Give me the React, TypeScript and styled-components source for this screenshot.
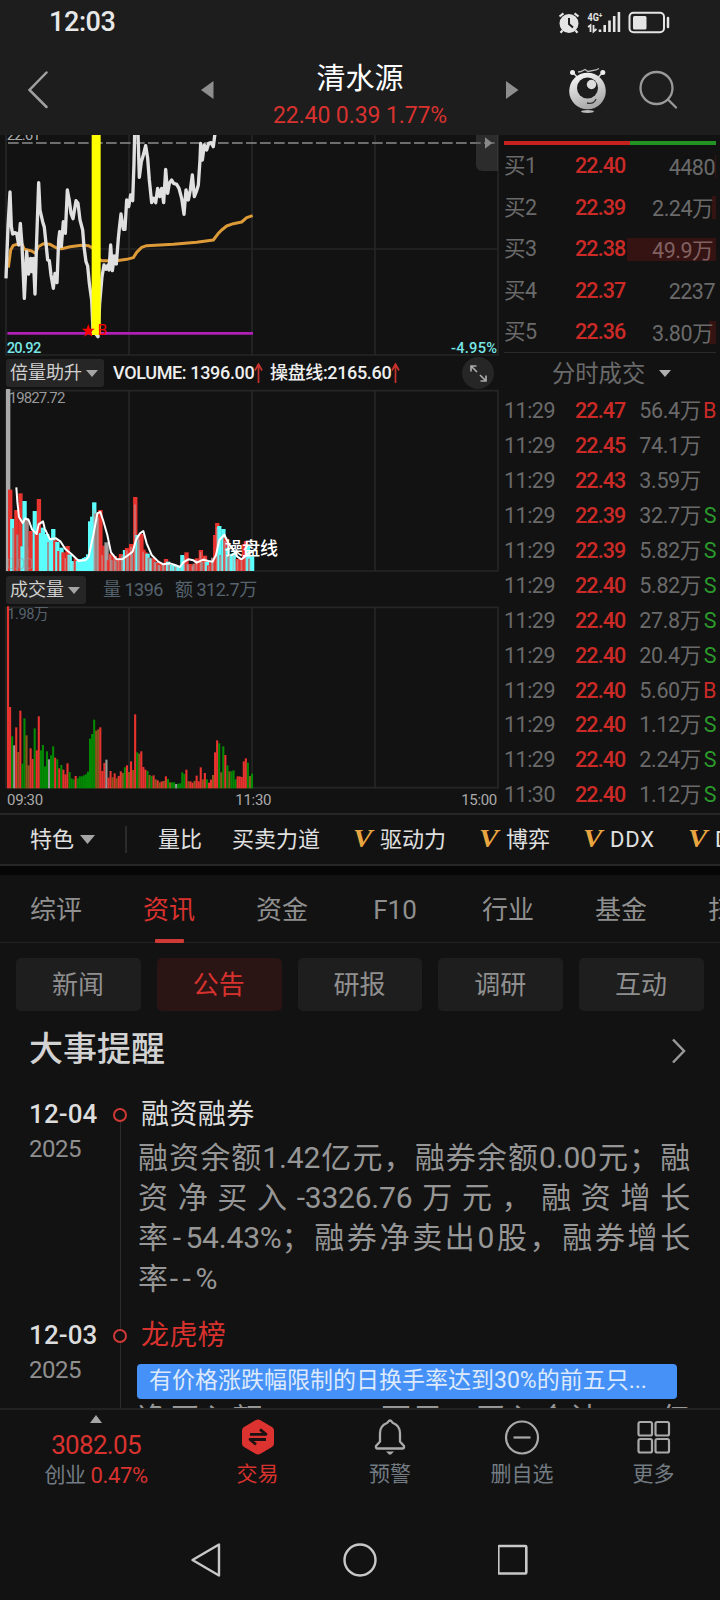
import React from "react";
import styled, { createGlobalStyle, css } from "styled-components";

const GlobalStyle = createGlobalStyle`
  * { box-sizing: border-box; }
  body { margin: 0; background: #121212; }
  svg { display: block; }
`;

const sans = `Roboto, "Noto Sans CJK SC", sans-serif`;

const Screen = styled.div`
  width: 720px; height: 1600px; overflow: hidden;
  display: flex; flex-direction: column;
  background: #121212; color: #ddd;
  font-family: ${sans}; white-space: nowrap;
`;

/* ---------- header ---------- */
const StatusBar = styled.div`
  height: 45px; flex: none; background: #1d1d1d;
  display: flex; align-items: center; justify-content: space-between;
  padding: 0 50px 0 49px;
`;
const Clock = styled.div`font-size: 27px; line-height: 47px; font-weight: 500; color: #e8e8e8; letter-spacing: -0.4px;`;
const Header = styled.div`
  height: 90px; flex: none; background: #1d1d1d;
  display: grid; grid-template-columns: 201px 72px 174px 59px 51px 71px 92px; align-items: center;
`;
const Cell = styled.div<{ $pl?: number }>`display: flex; padding-left: ${p => p.$pl ?? 0}px;`;
const Title = styled.div`padding-top: 14px; height: 90px;`;
const StockName = styled.div`font-size: 29px; line-height: 40px; color: #fff; text-align: center;`;
const StockQuote = styled.div`font-size: 23px; line-height: 34px; color: #d8322f; text-align: center; letter-spacing: -0.1px;`;

/* ---------- quote area ---------- */
const Market = styled.div`height: 680px; flex: none; display: flex; border-bottom: 2px solid #262626;`;
const Charts = styled.div`width: 504px; display: flex; flex-direction: column;`;
const Side = styled.div`width: 212px; display: flex; flex-direction: column;`;

const IndicatorRow = styled.div<{ $h: number }>`
  height: ${p => p.$h}px; flex: none; display: flex; align-items: center; padding-left: 6px;
  font-size: 18px; line-height: 26px;
`;
const Picker = styled.div<{ $w: number }>`
  width: ${p => p.$w}px; height: 28px; padding-left: 4px; border-radius: 3px; background: #262626; color: #d0d0d0;
  display: flex; align-items: center; gap: 4px;
`;
const Reading = styled.span<{ $ml: number; $w?: number; $dim?: boolean }>`
  margin-left: ${p => p.$ml}px; display: flex; align-items: center; flex: none; letter-spacing: -0.35px;
  ${p => p.$w && css`width: ${p.$w}px;`}
  ${p => (p.$dim ? css`color: #56636e; letter-spacing: -0.5px;` : css`color: #eee; font-weight: 500;`)}
`;
const ExpandButton = styled.div`
  width: 32px; height: 32px; border-radius: 50%; background: #262626; margin-left: auto; margin-right: 10px;
  display: flex; align-items: center; justify-content: center;
`;
const TimeAxis = styled.div`
  height: 24px; padding: 0 7px 0 7px; width: 504px; display: grid; grid-template-columns: 1fr 1fr 1fr;
  font-size: 15px; line-height: 23px; color: #aaa; letter-spacing: -0.3px;
  span:nth-child(2) { padding-left: 65px; }
  span:nth-child(3) { text-align: right; }
`;

const Ratio = styled.div`height: 4px; margin: 6px 0 0; display: flex; flex: none;`;
const RatioPart = styled.div<{ $w: number; $c: string }>`width: ${p => p.$w}px; background: ${p => p.$c};`;
const Bids = styled.div`height: 208px; padding-top: 0.5px; flex: none; display: flex; flex-direction: column; border-bottom: 1px solid #2a2a2a;`;
const rowText = css`font-size: 21.5px; line-height: 30px; color: #6a6a6a; letter-spacing: -0.5px;`;
const BidRow = styled.div`
  height: 41.5px; flex: none; display: grid; grid-template-columns: 72px 51px 89px; align-items: center; ${rowText}
`;
const Price = styled.span`color: #cb2a27; font-weight: 500; letter-spacing: -0.9px; margin-left: -1px;`;
const BidVolume = styled.span<{ $depth: number; $inset: number }>`
  height: 23px; line-height: 25px; text-align: right; padding-right: ${p => p.$inset}px;
  background: linear-gradient(#351313, #351313) right / ${p => p.$depth}px 100% no-repeat;
  ${p => p.$depth > 80 && css`color: #806060;`}
`;
const TradesTitle = styled.div`
  height: 41px; flex: none; display: flex; align-items: center; padding-left: 48px; gap: 14px;
  font-size: 23.3px; line-height: 32px; color: #6a6a6a;
`;
const Trades = styled.div`display: flex; flex-direction: column;`;
const TradeRow = styled.div`
  height: 34.9px; flex: none; display: grid; grid-template-columns: 72px 51px 74px 15px; align-items: center; ${rowText}
`;
const TradeVolume = styled.span`text-align: right; letter-spacing: -0.35px;`;
const Mark = styled.span<{ $buy: boolean }>`text-align: right; color: ${p => (p.$buy ? "#cb2a27" : "#2b9a2b")};`;

/* ---------- feature strip and tabs ---------- */
const Features = styled.div`
  height: 51px; flex: none; display: flex; align-items: center; border-bottom: 2px solid #262626; padding-left: 30px;
  font-size: 22px; line-height: 34px; color: #e0e0e0;
`;
const Feature = styled.span<{ $ml: number; $latin?: boolean }>`
  margin-left: ${p => p.$ml}px; flex: none; display: flex; align-items: center; gap: 6px;
  ${p => p.$latin && css`letter-spacing: 0.8px;`}
`;
const VBadge = styled.b`
  font: italic bold 26px/28px "Liberation Serif", serif; width: 21px; color: #e9a640; letter-spacing: 0;
  transform: scaleX(1.12); transform-origin: left; padding-bottom: 2px;
`;
const Divider = styled.i`width: 2px; height: 27px; flex: none; background: #2b2b2b; margin-left: 30px;`;
const Gap = styled.div`height: 9px; flex: none; background: #060606;`;
const Tabs = styled.div`height: 68px; flex: none; display: flex; border-bottom: 1px solid #222; margin-bottom: 15px;`;
const Tab = styled.div<{ $on?: boolean }>`
  width: 113px; flex: none; text-align: center; font-size: 26px; line-height: 70px; height: 68px; padding-right: 1px;
  color: ${p => (p.$on ? "#d8322f" : "#8f8f8f")};
  position: relative;
  ${p => p.$on && css`&::after { content: ""; position: absolute; left: 42px; bottom: 0; width: 29px; height: 4px; border-radius: 1px; background: #cf3936; }`}
`;
const Pills = styled.div`height: 53px; flex: none; display: grid; grid-template-columns: repeat(5, 1fr); gap: 16px; padding: 0 16px;`;
const Pill = styled.div<{ $on?: boolean }>`
  border-radius: 5px; text-align: center; font-size: 26px; line-height: 54px; height: 53px; padding-right: 1px;
  background: ${p => (p.$on ? "#2a1414" : "#1e1e1e")}; color: ${p => (p.$on ? "#d8322f" : "#8f8f8f")};
`;

/* ---------- timeline ---------- */
const SectionHead = styled.div`
  height: 79px; flex: none; display: flex; justify-content: space-between; align-items: flex-start; padding: 15px 34px 0 29px;
  font-size: 34px; line-height: 46px; font-weight: 500; color: #d2d2d2;
  svg { margin-top: 12px; }
`;
const Timeline = styled.div`height: 318px; flex: none; overflow: hidden;`;
const Entry = styled.div<{ $h: number }>`height: ${p => p.$h}px; display: grid; grid-template-columns: 84px 25px 1fr; padding-left: 29px;`;
const Day = styled.div`font-size: 26px; line-height: 48px; height: 47px; font-weight: 500; color: #ddd; letter-spacing: 0.1px;`;
const Year = styled.div`font-size: 24px; line-height: 24px; color: #8f8f8f; letter-spacing: -0.5px;`;
const Rail = styled.div<{ $first?: boolean }>`
  display: flex; flex-direction: column; align-items: center; width: 14px;
  &::before { content: ""; height: 18px; width: 1px; background: ${p => (p.$first ? "transparent" : "#2c2c2c")}; }
  &::after { content: ""; flex: 1; width: 1px; background: #2c2c2c; }
`;
const Dot = styled.i`width: 14px; height: 14px; flex: none; border-radius: 50%; border: 2px solid #cf3936;`;
const Headline = styled.div<{ $hot?: boolean }>`
  font-size: 28px; line-height: 50px; height: 46px; padding-left: 3px; color: ${p => (p.$hot ? "#d8322f" : "#ddd")};
  letter-spacing: 0.4px;
`;
const Body = styled.div<{ $top?: number }>`width: 552px; padding-top: ${p => p.$top ?? 0}px; font-size: 30px; line-height: 40.4px; color: #969696;`;
const Line = styled.div<{ $last?: boolean }>`text-align: justify; text-align-last: ${p => (p.$last ? "left" : "justify")}; letter-spacing: -0.2px;`;
const Dash = styled.span`letter-spacing: 4.5px; padding-left: 2px;`;
const Tag = styled.div`
  width: 540px; height: 35px; margin: 7px 0 0 -1px; padding-left: 12px; border-radius: 4px; background: #4691f7;
  font-size: 23px; line-height: 34px; color: #dce9fc;
`;

/* ---------- bottom bars ---------- */
const BottomBar = styled.div`
  height: 112px; flex: none; border-top: 2px solid #222; display: grid; grid-template-columns: 192px 131px 134px 130px 133px;
`;
const Index = styled.div`display: flex; flex-direction: column; align-items: center; padding-top: 5px; color: #d8322f;`;
const IndexValue = styled.div`font-size: 26px; line-height: 30px; letter-spacing: -0.7px; margin-top: 7px;`;
const IndexChange = styled.div`font-size: 22px; line-height: 31px; display: flex; gap: 5px; letter-spacing: -0.4px;`;
const Muted = styled.span`color: #737b83; font-size: 21px;`;
const Action = styled.div<{ $on?: boolean }>`
  display: flex; flex-direction: column; align-items: center; padding-top: 9px; font-size: 21px; line-height: 30px;
  color: ${p => (p.$on ? "#d8322f" : "#737b83")};
  svg { margin-bottom: 4px; flex: none; }
`;
const SystemNav = styled.div`flex: 1; display: flex; align-items: flex-start; padding: 22px 0 0 188px; gap: 119px;`;

/* Per-minute volume: bar height out of 546 and direction (r up, g down, o mixed, n flat). */
const volumes = (
  "546r 244r 156g 129n 183r 109o 233r 74g 210g 159o 69o 120r 88r 180g 114r 216r 114g 130g 66g 111g 87n 99g 126g 92r 87g 60r 70g 56r 42r 75r 49g 30g 27g 37r " +
  "30g 36g 36g 39g 42g 50g 149g 163g 206g 173o 177o 183r 52r 76r 86n 32r 52r 33o 45r 30o 37r 51r 46o 63g 69r 49o 81r 55o 222r 108g 104o 111r 64r 56r 52g 40o 37g 39r 27o 24r 18o " +
  "21r 22o 36r 28g 18o 18g 18g 13n 14g 15g 48g 43g 56r 21o 21r 17r 22o 38r 21r 63r 27o 46r 27g 17r 26r 40o 108r 144r 135g 48o 126g 100r 69g 51o 51g 54g 27g 36r 36r 34r 81r 90r 77g 37o 44g"
).split(" ").map(s => ({ h: parseInt(s, 10), k: s.slice(-1) }));

const STEP = 6.15;
const volumeFill: Record<string, string> = { r: "#e8332f", g: "#048904", o: "#8a5a1c", n: "#9a9a9a" };
const leverFill: Record<string, string> = { r: "#e8332f", g: "#5cfdfd", o: "#a08484", n: "#9a9a9a" };

const pricePath =
  "18,445 24,290 30,186 34,290 38,312 44,308 50,310 56,345 61,280 66,345 73,505 80,365 86,432 92,385 96,425 100,385 105,492 110,330 116,158 120,240 128,275 133,292 138,340 143,390 148,392 153,435 160,475 165,430 171,458 176,330 179,305 184,350 190,275 196,310 202,180 208,212 213,250 219,266 228,212 234,220 240,270 248,300 252,350 258,395 263,408 268,460 275,510 279,600 294,620 299,520 306,440 312,405 318,418 324,405 327,420 332,345 337,422 343,378 349,402 355,325 358,295 363,252 370,298 375,298 380,210 386,230 392,195 398,212 402,100 404,10 414,10 418,142 424,95 430,75 437,47 443,85 448,150 455,218 461,205 467,218 473,175 479,200 485,175 491,218 497,118 503,190 508,160 515,150 521,160 530,163 537,175 545,205 552,253 558,180 565,210 571,180 577,135 583,200 589,185 595,165 600,90 602,40 607,90 613,45 620,60 626,40 633,38 640,50 645,10";
const averagePath =
  "25,413 32,360 40,346 55,342 65,340 73,358 95,363 106,370 115,350 130,341 150,343 170,354 185,356 210,350 245,346 265,347 280,355 290,385 305,392 350,392 380,388 400,383 410,367 425,352 440,347 520,343 590,337 640,330 655,310 665,300 680,288 700,281 725,276 740,263 758,257";
const leverPath =
  "49,307 52,350 57,396 68,414 76,400 86,405 96,433 110,447 116,418 129,409 134,430 150,463 168,460 182,470 196,492 215,508 236,528 258,525 266,515 280,450 292,385 301,381 310,408 322,450 333,502 350,523 368,522 385,510 398,500 408,465 420,445 430,438 440,475 455,510 475,530 490,538 510,535 525,540 540,546 550,532 565,523 580,526 590,533 610,524 625,528 638,530 648,510 658,465 673,449 685,475 700,495 712,515 724,523 735,515 745,505 758,500";

const Label = styled.text`font-family: ${sans};`;
const Frame = styled.svg`flex: none; overflow: hidden;`;

const Grid = ({ top, bottom, mid }: { top?: number; bottom: number; mid?: number }) => (
  <g stroke="#262626" strokeWidth={5} fill="none">
    {[18, 387, 756, 1125, 1494].map(x => <path key={x} d={`M${x} ${top ?? 0}V${bottom}`} />)}
    {[top, mid, bottom].map((y, i) => y !== undefined && <path key={i} d={`M16 ${y}H1496`} />)}
  </g>
);

const PriceChart = () => (
  <Frame width={504} height={222} viewBox="0 15 1512 666">
    <Grid bottom={675} mid={357} />
    <path d="M18 39H1494" stroke="#8c8c8c" strokeWidth={5} strokeDasharray="32 10" strokeDashoffset={-6} />
    <Label x={20} y={31} fontSize={45} fill="#aaa" textLength={102}>22.61</Label>
    <path d="M22 610H759" stroke="#b01fb6" strokeWidth={8} />
    <polyline points={averagePath} fill="none" stroke="#dd9a38" strokeWidth={9} strokeLinejoin="round" />
    <polyline points={pricePath} fill="none" stroke="#e0e0e0" strokeWidth={10} strokeLinejoin="round" />
    <rect x={275} y={0} width={27} height={615} fill="#ffff00" />
    <path d="M265 582l5 14h14l-11 9 4 15-12-9-12 9 4-15-11-9h14z" fill="#f00" />
    <Label x={293} y={615} fontSize={46} fill="#f00" textLength={28} lengthAdjust="spacingAndGlyphs">B</Label>
    <Label x={20} y={668} fontSize={44} fontWeight={500} fill="#77e6e6" textLength={104}>20.92</Label>
    <Label x={1353} y={668} fontSize={44} fontWeight={500} fill="#77e6e6" textLength={138}>-4.95%</Label>
    <path d="M1428 0h66v123h-46q-20 0-20-20z" fill="#555" fillOpacity={0.4} />
    <path d="M1483 22l22 17-22 17z" fill="#888" transform="translate(-28 0)" />
  </Frame>
);

const LeverChart = () => (
  <Frame width={504} height={185} viewBox="0 12 1512 555">
    <Grid top={17} bottom={558} />
    <Label x={26} y={54} fontSize={45} fill="#999" textLength={170}>19827.72</Label>
    {volumes.map((v, i) => (
      <rect key={i} x={18 + i * STEP} y={558 - v.h} width={13} height={v.h} fill={i ? leverFill[v.k] : "#aaa"} />
    ))}
    {volumes.map((v, i) => i % 2 === 0 && i > 26 && !(i > 33 && i < 42) && (
      <rect key={i} x={21 + i * STEP} y={558 - v.h * 0.9} width={5} height={v.h * 0.9} fill="#b9a9a9" fillOpacity={0.55} />
    ))}
    <Label x={20} y={552} fontSize={45} fill="#999" fillOpacity={0.55} textLength={80}>0.00</Label>
    <polyline points={leverPath} fill="none" stroke="#fff" strokeWidth={6} strokeLinejoin="round" />
    <Label x={674} y={511} fontSize={54} fontWeight={500} fill="#fff" textLength={160}>操盘线</Label>
  </Frame>
);

const VolumeChart = () => (
  <Frame width={504} height={183} viewBox="0 107 1512 549">
    <Grid top={111} bottom={652} />
    <Label x={22} y={146} fontSize={44} fill="#56636e" textLength={124}>1.98万</Label>
    {volumes.map((v, i) => (
      <rect key={i} x={21 + i * STEP} y={654 - v.h} width={6.3} height={v.h} fill={volumeFill[v.k]} />
    ))}
  </Frame>
);

const Caret = ({ w = 12, h = 7, up = false, fill = "#a5a5a5" }: { w?: number; h?: number; up?: boolean; fill?: string }) => (
  <svg width={w} height={h} viewBox="0 0 12 7" preserveAspectRatio="none"><path d={up ? "M0 7L6 0 12 7z" : "M0 0H12L6 7z"} fill={fill} /></svg>
);
const RiseIcon = styled.svg`flex: none;`;
const Rise = () => (
  <RiseIcon width={9} height={20} viewBox="0 0 9 20" fill="none" stroke="#c8322c" strokeWidth={1.7}><path d="M4.5 20V1.5M1 7.5L4.5 1 8 7.5" /></RiseIcon>
);

const StatusIcons = () => (
  <svg width={112} height={26} viewBox="558 10 112 26" fill="none" stroke="#e4e4e4">
    <circle cx={569} cy={23.5} r={9.5} fill="#e4e4e4" stroke="none" />
    <path d="M569 18v6l4 3.5" stroke="#1d1d1d" strokeWidth={2} />
    <path d="M559.5 16.5l4-3.2M578.5 16.5l-4-3.2M562.5 30.5l-2 2.2M575.5 30.5l2 2.2" strokeWidth={2.2} />
    <Label x={587.5} y={21} fontSize={11} fontWeight={700} fill="#e4e4e4" stroke="none" textLength={15} lengthAdjust="spacingAndGlyphs">4G⁺</Label>
    <path d="M588 27l2.5-1.8V32M593.5 25v6.5l3-2.5" strokeWidth={1.8} />
    <path d="M600 29.5v2.5M604.7 25v7M609.5 20.5V32M614.2 16v16M618.9 12v20" strokeWidth={2.6} />
    <rect x={629.5} y={12.8} width={34.5} height={19.5} rx={4} strokeWidth={2} />
    <rect x={633} y={16} width={13.5} height={13.5} rx={1.5} fill="#e4e4e4" stroke="none" />
    <path d="M668 18v9" strokeWidth={2.5} strokeLinecap="round" />
  </svg>
);

const Mascot = () => (
  <svg width={40} height={48} viewBox="568 65 40 48">
    <defs>
      <linearGradient id="ball" x1="0" y1="0" x2="0.4" y2="1"><stop offset="0" stopColor="#fff" /><stop offset="1" stopColor="#aaa" /></linearGradient>
    </defs>
    <path d="M577 76l-4-4.5M598.5 76l4-4.5" stroke="#ddd" strokeWidth={1.5} />
    <circle cx={572.5} cy={71.5} r={2.5} fill="#eee" /><circle cx={602.8} cy={71.5} r={2.5} fill="#eee" />
    <path d="M578 71l3-.5 4-2 3 2 8-1.500 3-1.500" stroke="#bbb" strokeWidth={1.3} fill="none" />
    <circle cx={587.5} cy={90} r={18.3} fill="url(#ball)" />
    <circle cx={587.5} cy={87} r={10.5} fill="#1d1d1d" />
    <circle cx={591.5} cy={83.5} r={4.7} fill="#ddd" />
    <path d="M587 102q7 1.500 9-4" stroke="#333" strokeWidth={1.3} fill="none" />
    <ellipse cx={587.5} cy={110.5} rx={6.5} ry={1.5} fill="#bbb" />
  </svg>
);

const bids = [
  ["买1", "22.40", "4480", 1, 1], ["买2", "22.39", "2.24万", 4, 3], ["买3", "22.38", "49.9万", 89, 3],
  ["买4", "22.37", "2237", 0, 1], ["买5", "22.36", "3.80万", 7, 3],
] as const;

const trades = [
  ["11:29", "22.47", "56.4万", "B"], ["11:29", "22.45", "74.1万", ""], ["11:29", "22.43", "3.59万", ""],
  ["11:29", "22.39", "32.7万", "S"], ["11:29", "22.39", "5.82万", "S"], ["11:29", "22.40", "5.82万", "S"],
  ["11:29", "22.40", "27.8万", "S"], ["11:29", "22.40", "20.4万", "S"], ["11:29", "22.40", "5.60万", "B"],
  ["11:29", "22.40", "1.12万", "S"], ["11:29", "22.40", "2.24万", "S"], ["11:30", "22.40", "1.12万", "S"],
];

export default function App() {
  return (
    <Screen>
      <GlobalStyle />
      <StatusBar><Clock>12:03</Clock><StatusIcons /></StatusBar>
      <Header>
        <Cell $pl={28}>
          <svg width={20} height={38} fill="none" stroke="#a0a0a0" strokeWidth={2.5} strokeLinecap="round"><path d="M18.5 1.5L1.5 19l17 17" /></svg>
        </Cell>
        <Cell><svg width={13} height={18}><path d="M0 9L12.5 0v18z" fill="#8e8e8e" /></svg></Cell>
        <Title>
          <StockName>清水源</StockName>
          <StockQuote>22.40 0.39 1.77%</StockQuote>
        </Title>
        <i />
        <Cell><svg width={13} height={18}><path d="M12.5 9L0 0v18z" fill="#8e8e8e" /></svg></Cell>
        <Cell $pl={11}><Mascot /></Cell>
        <Cell $pl={11}>
          <svg width={40} height={40} viewBox="0 0 40 40" fill="none" stroke="#9a9a9a" strokeWidth={2.3} strokeLinecap="round"><circle cx={17.5} cy={18} r={16} /><path d="M29.5 30l7.5 7.5" /></svg>
        </Cell>
      </Header>

      <Market>
        <Charts>
          <PriceChart />
          <IndicatorRow $h={32}>
            <Picker $w={98}>倍量助升<Caret /></Picker>
            <Reading $ml={9} $w={148}>VOLUME: 1396.00<Rise /></Reading>
            <Reading $ml={9}>操盘线:2165.60<Rise /></Reading>
            <ExpandButton>
              <svg width={17} height={17} viewBox="0 0 17 17" fill="none" stroke="#aaa" strokeWidth={1.7}><path d="M1 6.5V1h5.5M1 1l6 6M16 10.5V16h-5.5M16 16l-6-6" /></svg>
            </ExpandButton>
          </IndicatorRow>
          <LeverChart />
          <IndicatorRow $h={32}>
            <Picker $w={80}>成交量<Caret /></Picker>
            <Reading $ml={17} $w={72} $dim>量 1396</Reading>
            <Reading $ml={0} $dim>额 312.7万</Reading>
          </IndicatorRow>
          <VolumeChart />
          <TimeAxis><span>09:30</span><span>11:30</span><span>15:00</span></TimeAxis>
        </Charts>
        <Side>
          <Ratio><RatioPart $w={126} $c="#c6201f" /><RatioPart $w={86} $c="#229222" /></Ratio>
          <Bids>
            {bids.map(([n, p, v, d, r]) => (
              <BidRow key={n}><span>{n}</span><Price>{p}</Price><BidVolume $depth={d} $inset={r}>{v}</BidVolume></BidRow>
            ))}
          </Bids>
          <TradesTitle>分时成交<Caret fill="#b0b0b0" /></TradesTitle>
          <Trades>
            {trades.map(([t, p, v, s], i) => (
              <TradeRow key={i}><span>{t}</span><Price>{p}</Price><TradeVolume>{v}</TradeVolume><Mark $buy={s === "B"}>{s}</Mark></TradeRow>
            ))}
          </Trades>
        </Side>
      </Market>

      <Features>
        <Feature $ml={0}>特色<Caret w={15} h={9} /></Feature>
        <Divider />
        <Feature $ml={31}>量比</Feature>
        <Feature $ml={30}>买卖力道</Feature>
        <Feature $ml={33}><VBadge>V</VBadge>驱动力</Feature>
        <Feature $ml={33}><VBadge>V</VBadge>博弈</Feature>
        <Feature $ml={33} $latin><VBadge>V</VBadge>DDX</Feature>
        <Feature $ml={33} $latin><VBadge>V</VBadge>DDY</Feature>
      </Features>
      <Gap />
      <Tabs>
        <Tab>综评</Tab><Tab $on>资讯</Tab><Tab>资金</Tab><Tab>F10</Tab><Tab>行业</Tab><Tab>基金</Tab><Tab>扫描</Tab>
      </Tabs>
      <Pills>
        <Pill>新闻</Pill><Pill $on>公告</Pill><Pill>研报</Pill><Pill>调研</Pill><Pill>互动</Pill>
      </Pills>

      <SectionHead>
        大事提醒
        <svg width={15} height={26} fill="none" stroke="#999" strokeWidth={2.5}><path d="M2 1.5L13 13 2 24.5" /></svg>
      </SectionHead>
      <Timeline>
        <Entry $h={221}>
          <div><Day>12-04</Day><Year>2025</Year></div>
          <Rail $first><Dot /></Rail>
          <div>
            <Headline>融资融券</Headline>
            <Body $top={1.5}>
              <Line>融资余额1.42亿元，融券余额0.00元；融</Line>
              <Line>资净买入-3326.76万元，融资增长</Line>
              <Line>率<Dash>-</Dash>54.43%；融券净卖出0股，融券增长</Line>
              <Line $last>率<Dash>--</Dash>%</Line>
            </Body>
          </div>
        </Entry>
        <Entry $h={221}>
          <div><Day>12-03</Day><Year>2025</Year></div>
          <Rail><Dot /></Rail>
          <div>
            <Headline $hot>龙虎榜</Headline>
            <Tag>有价格涨跌幅限制的日换手率达到30%的前五只...</Tag>
            <Body><Line>净买入额-1066.22万元，买入合计1.06亿</Line></Body>
          </div>
        </Entry>
      </Timeline>

      <BottomBar>
        <Index>
          <Caret up h={8} />
          <IndexValue>3082.05</IndexValue>
          <IndexChange><Muted>创业</Muted>0.47%</IndexChange>
        </Index>
        <Action $on>
          <svg width={34} height={36} viewBox="0 0 34 36">
            <path d="M14.5 1.2q2.5-1.4 5 0L31 8q2 1.3 2 3.5v13q0 2.2-2 3.5l-11.5 6.8q-2.5 1.4-5 0L3 28q-2-1.3-2-3.500v-13Q1 9.300 3 8z" fill="#dc3330" />
            <path d="M9 15.3h16l-6-5M25 20.5H9l6 5" fill="none" stroke="#1a1212" strokeWidth={2.8} strokeLinejoin="round" />
          </svg>交易
        </Action>
        <Action>
          <svg width={34} height={36} viewBox="0 0 34 36" fill="none" stroke="#aaa" strokeWidth={2.3}>
            <path d="M17 1.5c-1.6 0-2 2-3 2.5-5 2-7 5.5-7 10v8.5L3 27q-.5 2.5 1.500 2.500h25q2 0 1.500-2.500l-4-4.500V14c0-4.500-2-8-7-10-1-.5-1.400-2.500-3-2.500z" />
            <path d="M13 32.5h8l-3 3h-2z" fill="#aaa" stroke="none" />
          </svg>预警
        </Action>
        <Action>
          <svg width={36} height={36} viewBox="0 0 36 36" fill="none" stroke="#aaa" strokeWidth={2.2}><circle cx={18} cy={18.5} r={16} /><path d="M9.5 18.5h17" /></svg>删自选
        </Action>
        <Action>
          <svg width={34} height={36} viewBox="0 0 34 36" fill="none" stroke="#aaa" strokeWidth={2.2}>
            {[1.5, 18.5].map(x => [3, 20].map(y => <rect key={`${x}-${y}`} x={x} y={y} width={13.5} height={13.5} rx={1.8} />))}
          </svg>更多
        </Action>
      </BottomBar>
      <SystemNav>
        <svg width={36} height={36} viewBox="0 0 36 36" fill="none" stroke="#c8c8c8" strokeWidth={2.4} strokeLinejoin="round"><path d="M31 2.500v31L4.500 18z" /></svg>
        <svg width={36} height={36} viewBox="0 0 36 36" fill="none" stroke="#c8c8c8" strokeWidth={2.4}><circle cx={17} cy={18} r={15.5} /></svg>
        <svg width={36} height={36} viewBox="0 0 36 36" fill="none" stroke="#c8c8c8" strokeWidth={2.6}><rect x={0.3} y={4} width={28} height={27.5} rx={1} /></svg>
      </SystemNav>
    </Screen>
  );
}
